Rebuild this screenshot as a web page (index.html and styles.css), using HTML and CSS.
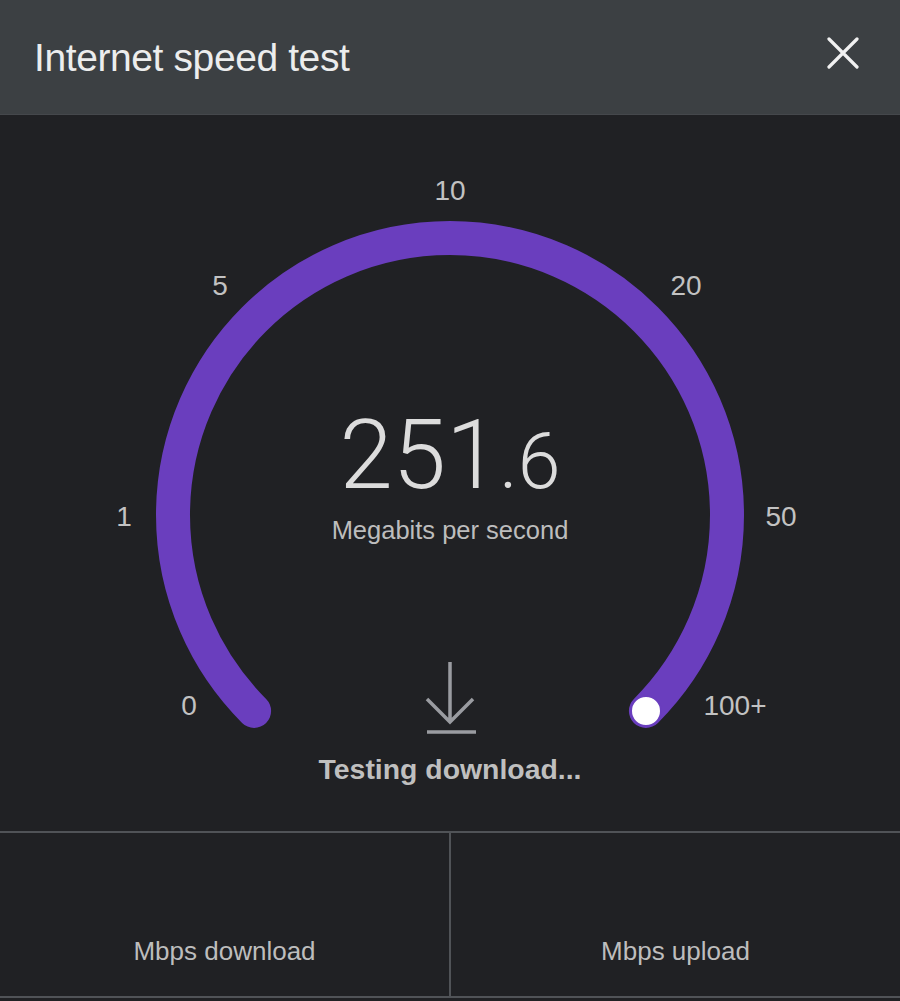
FILE: index.html
```html
<!DOCTYPE html>
<html>
<head>
<meta charset="utf-8">
<link rel="stylesheet" href="styles.css">
</head>
<body>
<div class="app">
  <header class="topbar">
    <h1 class="title">Internet speed test</h1>
    <button class="close" aria-label="Close">
      <svg width="32" height="32" viewBox="0 0 32 32"><path d="M2 2 L30 30 M30 2 L2 30" class="close-x"/></svg>
    </button>
  </header>
  <main class="gauge">
    <svg class="gauge-svg" width="900" height="716" viewBox="0 0 900 716">
      <path class="arc" d="M 254.1 595.9 A 277 277 0 1 1 645.9 595.9"/>
      <circle class="knob" cx="646" cy="596" r="15"/>
      <text class="tick" x="450" y="85">10</text>
      <text class="tick" x="220" y="180">5</text>
      <text class="tick" x="686" y="180">20</text>
      <text class="tick" x="124" y="411">1</text>
      <text class="tick" x="781" y="411">50</text>
      <text class="tick" x="189" y="600">0</text>
      <text class="tick" x="735" y="600">100+</text>
      <text class="value" x="450" y="373"><tspan class="value-int">251</tspan><tspan class="value-dec">.6</tspan></text>
      <text class="unit" x="450" y="424">Megabits per second</text>
      <g class="dl-icon">
        <path d="M450 547 V607 M427 584 L450 607 L473 584"/>
        <path d="M427 617 H476"/>
      </g>
      <text class="status" x="450" y="664">Testing download...</text>
    </svg>
  </main>
  <section class="stats">
    <div class="stat">Mbps download</div>
    <div class="stat">Mbps upload</div>
  </section>
</div>
</body>
</html>
```

FILE: styles.css
```css
* { box-sizing: border-box; }
html, body {
  margin: 0;
  padding: 0;
  background: #202124;
}
body {
  font-family: "Liberation Sans", Arial, sans-serif;
  width: 900px;
  height: 1001px;
  overflow: hidden;
}
.app {
  display: flex;
  flex-direction: column;
  width: 900px;
  height: 1001px;
}
.topbar {
  height: 115px;
  background: #3c4043;
  display: flex;
  align-items: center;
  justify-content: space-between;
  padding: 0 41px 0 34px;
  border-bottom: 1px solid #45484c;
}
.title {
  margin: 0;
  font-family: "Liberation Sans", Arial, sans-serif;
  font-weight: 400;
  font-size: 39px;
  color: #eceded;
  letter-spacing: -0.4px;
  padding-top: 2px;
}
.close {
  background: none;
  border: 0;
  padding: 0;
  width: 32px;
  height: 32px;
  display: flex;
  margin-top: -8px;
}
.close-x {
  stroke: #f1f1f1;
  stroke-width: 3.2;
  stroke-linecap: round;
  fill: none;
}
.gauge {
  height: 716px;
  display: flex;
  justify-content: center;
}
.gauge-svg { display: block; }
.arc {
  fill: none;
  stroke: #6a3ebe;
  stroke-width: 34;
  stroke-linecap: round;
}
.knob {
  fill: #ffffff;
  stroke: #6a3ebe;
  stroke-width: 2;
}
.tick {
  font-family: "Liberation Sans", Arial, sans-serif;
  font-size: 28px;
  fill: #c2c2c2;
  text-anchor: middle;
}
.value {
  font-family: Roboto, "Liberation Sans", sans-serif;
  font-weight: 300;
  fill: #dcdcdc;
  text-anchor: middle;
}
.value-int { font-size: 96px; }
.value-dec { font-size: 77px; }
.unit {
  font-family: "Liberation Sans", Arial, sans-serif;
  font-size: 25.5px;
  fill: #bdbdbd;
  text-anchor: middle;
}
.dl-icon path {
  fill: none;
  stroke: #9a9ca1;
  stroke-width: 3.5;
}
.status {
  font-family: "Liberation Sans", Arial, sans-serif;
  font-size: 28.4px;
  font-weight: 700;
  fill: #bfbfbf;
  text-anchor: middle;
}
.stats {
  height: 167px;
  display: grid;
  grid-template-columns: 449px 1fr;
  border-top: 2px solid #505357;
  border-bottom: 2px solid #505357;
}
.stat {
  display: flex;
  align-items: flex-end;
  justify-content: center;
  padding-bottom: 29px;
  font-size: 26px;
  color: #bdbdbd;
}
.stat + .stat {
  border-left: 2px solid #505357;
}
```
